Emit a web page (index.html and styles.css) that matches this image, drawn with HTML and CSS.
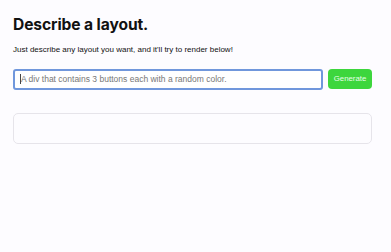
FILE: index.html
```html
<!DOCTYPE html>
<html lang="en">
<head>
    <meta charset="UTF-8">
    <meta name="viewport" content="width=device-width, initial-scale=1.0">
    <title>Describe a layout</title>
    <link rel="stylesheet" href="styles.css">
</head>
<body>
    <main class="page">
        <h1>Describe a layout.</h1>
        <p class="intro">Just describe any layout you want, and it'll try to render below!</p>

        <form class="prompt-form" onsubmit="return false">
            <div class="input-wrap">
                <span class="caret"></span>
                <input class="prompt-input" type="text" placeholder="A div that contains 3 buttons each with a random color.">
            </div>
            <button class="generate-button" type="submit">Generate</button>
        </form>

        <div class="output-box"></div>
    </main>
</body>
</html>
```

FILE: styles.css
```css
* {
    margin: 0;
    padding: 0;
    box-sizing: border-box;
}

body {
    font-family: 'Liberation Sans', Arial, sans-serif;
    color: #111;
    background-color: #fdfcff;
}

.page {
    padding: 15px 19px 0 13px;
}

h1 {
    font-family: Inter, 'Liberation Sans', sans-serif;
    font-size: 15.6px;
    font-weight: 700;
    line-height: 20px;
    letter-spacing: -0.1px;
}

.intro {
    font-size: 8px;
    line-height: 12px;
    margin-top: 9px;
}

.prompt-form {
    display: flex;
    align-items: center;
    gap: 5px;
    margin-top: 12px;
}

.input-wrap {
    flex: 1;
    position: relative;
}

.caret {
    position: absolute;
    left: 7px;
    top: 6px;
    width: 1px;
    height: 10px;
    background: #444;
}

.prompt-input {
    width: 100%;
    height: 21px;
    padding: 0 6px;
    border: 2px solid #7097dc;
    border-radius: 3px;
    background: #fff;
    font-family: inherit;
    font-size: 8.5px;
    color: #333;
    outline: none;
}

.prompt-input::placeholder {
    color: #777;
}

.generate-button {
    width: 44px;
    height: 20px;
    border: none;
    border-radius: 4px;
    background-color: #3dd63d;
    color: #e9ffe9;
    font-family: inherit;
    font-size: 7.8px;
    cursor: pointer;
}

.output-box {
    margin-top: 23px;
    height: 31px;
    border: 1px solid #e6e4ea;
    border-radius: 5px;
    background: #fdfcff;
}
```
